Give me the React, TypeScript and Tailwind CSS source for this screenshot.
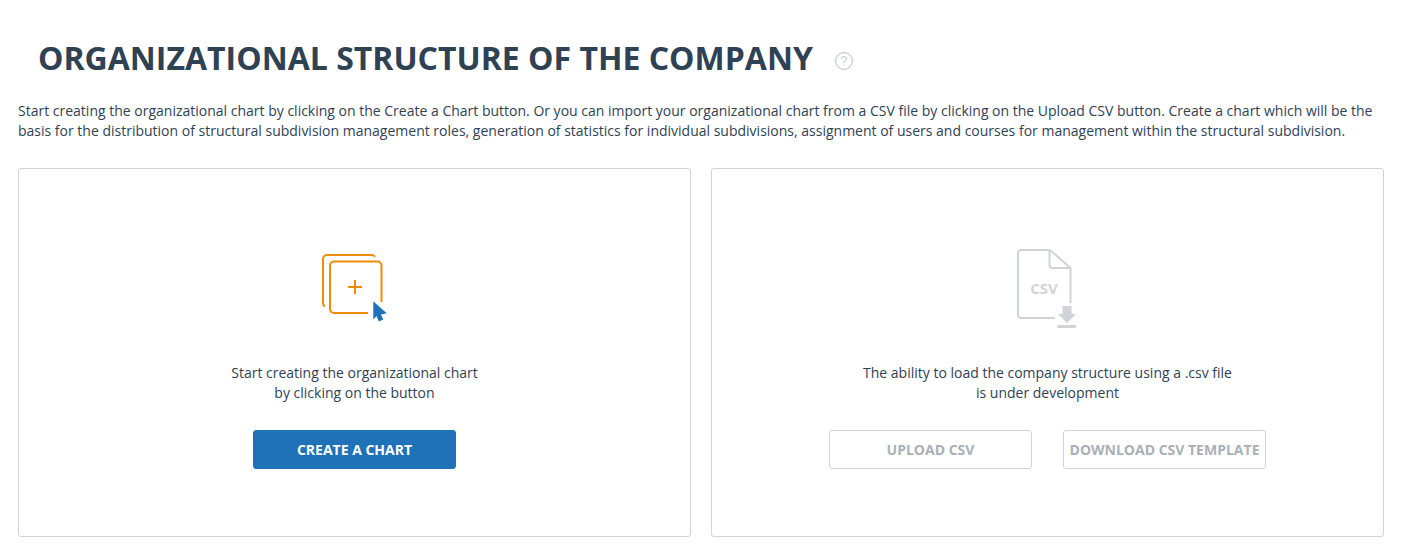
import React from 'react';

const ChartIcon: React.FC = () => (
  <svg width="81" height="80" viewBox="0 0 81 80" fill="none" aria-hidden="true">
    <g stroke="#ef8b08" strokeWidth="2">
      <path d="M11 57.500C9.800 56.800 9 55.500 9 54V10a4 4 0 0 1 4-4H57.500c1.500 0 2.800.7 3.500 1.800" />
      <path d="M54 64H20a4 4 0 0 1-4-4V16.500a4 4 0 0 1 4-4H63.500a4 4 0 0 1 4 4V53" />
      <path d="M34 38H48M41 31V45" />
    </g>
    <path d="M59.300 52.200L72.700 64.300L67 65.400L69.300 70.500L64.800 72.500L62.500 67L59.300 70.500Z" fill="#1f72b8" />
  </svg>
);

const CsvIcon: React.FC = () => (
  <svg width="81" height="80" viewBox="0 0 81 80" fill="none" aria-hidden="true">
    <g stroke="#d0d4d9" strokeWidth="2" strokeLinejoin="round">
      <path d="M48 69H14a3 3 0 0 1-3-3V4a3 3 0 0 1 3-3H43L63.500 19V54" />
      <path d="M42.500 1V16a3 3 0 0 0 3 3H63.500" />
    </g>
    <text x="37" y="45" textAnchor="middle" fill="#d0d4d9" className="font-['Open_Sans',sans-serif] text-[15px] font-bold">
      CSV
    </text>
    <path d="M55.500 57H64.500V65H69L60 74L51 65H55.500Z" fill="#d0d4d9" />
    <path d="M50.500 76H69V79H50.500Z" fill="#d0d4d9" />
  </svg>
);

interface ActionButtonProps {
  label: string;
  variant?: 'primary' | 'outline';
}

const ActionButton: React.FC<ActionButtonProps> = ({ label, variant = 'primary' }) => (
  <button
    type="button"
    disabled={variant === 'outline'}
    className={`h-[39px] w-[203px] whitespace-nowrap rounded-[3px] border text-sm font-bold ${
      variant === 'primary' ? 'border-[#1f72b8] bg-[#1f72b8] text-white' : 'border-[#d0d4d9] bg-white text-[#a9b0b6]'
    }`}
  >
    {label}
  </button>
);

interface CardProps {
  icon: React.ReactNode;
  lines: [string, string];
  children: React.ReactNode;
}

const Card: React.FC<CardProps> = ({ icon, lines, children }) => (
  <section className="flex flex-1 flex-col items-center rounded-[3px] border border-[#d0d4d9] pt-20 pb-[67px]">
    {icon}
    <p className="mt-[34px] text-center text-sm leading-5">
      {lines[0]}
      <br />
      {lines[1]}
    </p>
    <div className="mt-[27px] flex flex-wrap justify-center gap-[31px]">{children}</div>
  </section>
);

export default function App() {
  return (
    <main className="bg-white pt-9 pr-[23px] pb-[18px] pl-[18px] font-['Open_Sans',sans-serif] text-[#2f4254]">
      <header className="flex items-center gap-[22px] pl-5">
        <h1 className="text-[32px] leading-[44px] font-bold">ORGANIZATIONAL STRUCTURE OF THE COMPANY</h1>
        <button type="button" aria-label="Help" className="mt-1.5">
          <svg width="18" height="18" viewBox="0 0 18 18" fill="none" stroke="#b9bdc1" aria-hidden="true">
            <circle cx="9" cy="9" r="8.400" />
            <path d="M6.500 7C6.500 5.400 7.500 4.500 9 4.500S11.500 5.400 11.500 6.800C11.500 8.600 9 8.700 9 11M9 12.500V13.700" />
          </svg>
        </button>
      </header>

      <p className="mt-[21px] text-sm leading-5">
        Start creating the organizational chart by clicking on the Create a Chart button. Or you can import your
        organizational chart from a CSV file by clicking on the Upload CSV button. Create a chart which will be the basis
        for the distribution of structural subdivision management roles, generation of statistics for individual
        subdivisions, assignment of users and courses for management within the structural subdivision.
      </p>

      <div className="mt-[27px] flex gap-5">
        <Card icon={<ChartIcon />} lines={['Start creating the organizational chart', 'by clicking on the button']}>
          <ActionButton label="CREATE A CHART" />
        </Card>
        <Card
          icon={<CsvIcon />}
          lines={['The ability to load the company structure using a .csv file', 'is under development']}
        >
          <ActionButton label="UPLOAD CSV" variant="outline" />
          <ActionButton label="DOWNLOAD CSV TEMPLATE" variant="outline" />
        </Card>
      </div>
    </main>
  );
}
